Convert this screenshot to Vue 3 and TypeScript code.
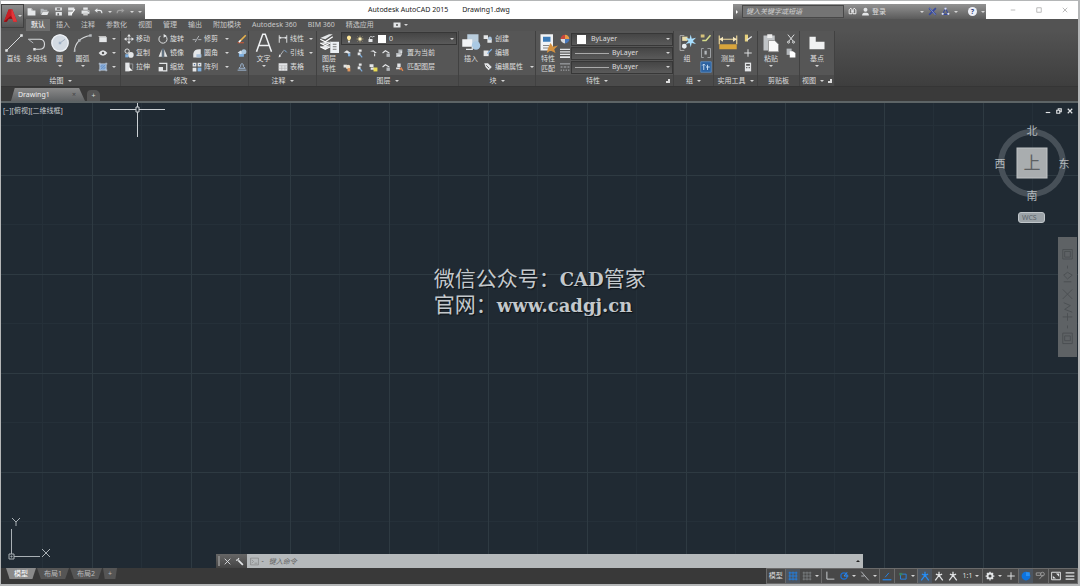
<script setup lang="ts">
import { h, ref, type FunctionalComponent } from 'vue'

type Shape = { d: string; f?: string; s?: string; w?: number }

const L = '#e4e6e8'
const M = '#b4b8bc'
const B = '#7fb0e0'
const stroke = (d: string, s = L, w = 1.5): Shape => ({ d, s, w })
const fill = (d: string, f = L): Shape => ({ d, f })
const circle = (x: number, y: number, r: number) =>
  `M${x - r} ${y}a${r} ${r} 0 1 0 ${2 * r} 0a${r} ${r} 0 1 0 ${-2 * r} 0z`

const glyphs: Record<string, Shape[]> = {
  logo: [fill('M1 14 6 1h4l5 13h-4l-1-3H6l-2 3z', '#b3161b'), fill('M8 1h2l5 13h-4L8 5z', '#e2363a'), fill('M6 1h3v7l-3 3-5 3z', '#c71f25'), fill('M1 14 8 8l2 3H6l-2 3z', '#8d0f14')],
  newdoc: [fill('M1 2h7l3 4h4v9H1z'), fill('M8 2v4h3z', '#999')],
  open: [fill('M1 3h5l1 2h6v2H5l-3 6H1z', M), fill('M5 8h11l-3 6H2z')],
  save: [fill('M2 1h12v5H2zM3 9h11v6H3z'), fill('M5 2h6v3H5zM6 11h3v4H6z', '#666')],
  saveas: [fill('M2 1h11v5H2zM2 8h7v7H2z'), stroke('M7 13 14 4', '#fff', 2)],
  print: [fill('M4 1h8v4H4zM1 6h14v6H1z'), fill('M4 10h8v5H4z', '#ccc'), fill('M12 7h2v1h-2z', '#555')],
  undo: [fill('M1 6 6 2v8z'), stroke('M4 6h6q4 0 4 5', L, 2)],
  redo: [fill('M15 6 10 2v8z', '#a0a0a0'), stroke('M12 6H6q-4 0-4 5', '#a0a0a0', 2)],
  line: [stroke('M2 14 14 2', '#d8dadc', 0.8), fill('M1 13h2v2H1zM13 1h2v2h-2z')],
  polyline: [stroke('M1 5h9q4 0 4 4t-4 4H7', '#d8dadc', 0.9), stroke('M1 5 5 8', M, 0.8), fill('M5 12h2v2H5z')],
  circle: [fill(circle(8, 8, 7), '#d3dae2'), stroke(circle(8, 8, 6.5), '#eef1f5', 0.9), stroke('M8 8 12 5', '#a3b0c0', 0.8), fill('M7 7h2v2H7z', '#9fb0c5')],
  arc: [stroke('M1 15Q2 4 14 2', '#d8dadc', 0.9), fill('M1 13h1v2H1zM4 5h2v2H4zM13 1h2v2h-2z', M)],
  rect: [fill('M2 5h12v8H2z'), stroke('M1 4h12', '#fff', 1)],
  ellipse: [fill('M1 8q7-9 14 0-7 9-14 0z'), fill(circle(8, 8, 2), '#555')],
  hatch: [fill('M3 3h10v10H3z', '#83a8d5'), stroke('M3 1v14M13 1v14M1 3h14M1 13h14', '#c7d6ea', 1.2), stroke('M4 12l8-8M4 8l4-4M8 12l4-4', '#5d86bd', 1)],
  move: [stroke('M8 2v12M2 8h12', L, 1.2), fill('M8 0 11 4H5zM8 16 11 12H5zM0 8l4-3v6zM16 8l-4-3v6z')],
  copy: [stroke(circle(5, 5, 3.5)), fill(circle(11, 11, 4.5)), fill('M2 10h5v5H2z', B)],
  stretch: [fill('M2 1h7v14H2z'), fill('M8 8l6 6H8z', '#fff'), stroke('M9 3h5v9', M, 1)],
  rotate: [stroke('M10 2A6.5 6.5 0 1 1 4 3'), fill('M9 0l5 3-5 3z')],
  mirror: [fill('M6 2v12H1zM10 2v12h5z'), stroke('M8 1v14', B, 1)],
  scale: [stroke('M2 2h12v12H8', L, 2), fill('M1 8h7v7H1z')],
  trim: [stroke('M1 9h5M10 9h5', M), stroke('M5 13 11 3', M)],
  fillet: [fill('M2 15V9Q3 2 12 2h2v13z'), fill('M7 10h8v5H7z', '#a9bfd7')],
  array: [fill('M1 1h6v6H1zM9 1h6v6H9zM1 9h6v6H1z'), fill('M9 9h6v6H9z', B), fill('M3 3h2v2H3zM11 3h2v2h-2z', '#5678a4')],
  erase: [stroke('M5 11 14 2', '#e9b34e', 2.5), stroke('M1 14h10', '#e35b32', 1.5), stroke('M3 13l3-3', '#fff', 2.5)],
  explode: [fill('M3 8h8v6H3z', B), fill('M1 7l5-3 5 3-5 3z', '#d7e4ef'), fill(circle(11, 6, 4), '#a9c5dc')],
  offset: [stroke('M1 13h14M3 10l3-3V4q2-3 4 0v3l3 3z', '#a4bfdd')],
  letter: [stroke('M2 15 7 1h2l5 14M4 10h8', '#eef0f2', 1.2)],
  dim: [stroke('M2 2v12M14 2v12M2 6h12'), fill('M2 6l3-2v4zM14 6l-3-2v4z')],
  leader: [stroke('M2 14 9 4', M), fill('M1 15l1-5 3 3z'), stroke('M10 3l4 4', B)],
  table: [fill('M1 2h14v12H1z'), stroke('M1 6h14M1 10h14M6 6v8M11 6v8', '#aaa', 0.9)],
  layers: [fill('M1 4l7-3h3L5 5zM1 8l5-1h4L5 9zM1 11l5-1h3l-4 3z'), stroke('M1 5l4 2 6-4M1 8l4 2 4-2M1 11l4 2 4-2', '#fff', 1), fill('M9 7h7v9H9z', '#edf1f5'), stroke('M11 9h3M11 11h3M11 13h3', '#777', 0.8)],
  bulb: [fill('M8 1a4.500 4.500 0 0 1 2.500 8l-.5 2H6l-.5-2A4.500 4.500 0 0 1 8 1z', '#ffe89a'), fill('M6 12h4v3H6z', '#c9ccd0')],
  sun: [fill(circle(8, 8, 3.5), '#fff2b8'), stroke('M8 1v3M8 12v3M1 8h3M12 8h3M3 3l2 2M11 11l2 2M3 13l2-2M11 5l2-2', '#e6cf8a', 1)],
  unlock: [stroke('M5 8V5q3-5 6 0', L), fill('M3 8h8v6H3z'), stroke('M11 3h4', L)],
  layA: [fill('M1 6l6-4 7 5-4 2-3-2z'), fill('M9 8h4v5H9z', B)],
  layB: [fill('M5 1h5v4H5zM3 6h5v5H3z'), stroke('M7 10l4 5', B, 2)],
  layC: [fill('M2 4l6-2 6 5h-4L8 5z'), stroke('M10 8v5', L, 2)],
  layD: [stroke('M1 7l5-4 7 4', L, 2), fill('M8 8h6v6H8z', M)],
  layE: [fill('M6 1h7v6H6zM2 7h8v7H2z', M), stroke('M4 11h7V4', '#fff')],
  layF: [fill('M1 3h6v5H1z'), fill(circle(9, 7, 4), '#e9dfcc'), fill('M8 9h5v6H8z', '#df965d')],
  layG: [fill('M1 2h7v5H1zM3 8h6v4H3z'), fill('M8 8h7v7H8z', '#eadc54')],
  layH: [fill('M4 1h6v6H4zM2 8h7v3H2z'), stroke('M8 12l3-3 3 5', '#e2874e', 2.5)],
  insert: [fill('M5 1h9v8H5z', '#b9cddd'), fill('M1 5h8v6H1z', '#f1f3f5'), fill(circle(12, 10, 3.4), '#aac9e3'), stroke('M4 13h5v-2', L, 1)],
  create: [fill('M1 2h7v6H1zM7 8h7v6H7z'), fill(circle(11, 7, 3), '#a8c4dd')],
  edit: [fill('M1 4h8v9H1z'), stroke('M7 9 14 2', B, 2)],
  attr: [fill('M2 2h6l6 6-5 5-5-5z'), stroke('M5 5l5 5', '#666')],
  match: [fill('M2 1h10v13H2z', '#f1f3f5'), fill('M4 3h6v4H4z', '#3c7cb9'), stroke('M4 10h5M4 12h4', '#888', 0.8), fill('M10 8l2 3 4-1-3 3 1 3-4-2-3 2 1-4z', '#d4913f')],
  wheel: [fill('M8 8V1a7 7 0 0 1 7 7z', '#e99a45'), fill('M8 8H1a7 7 0 0 1 7-7z', '#c8473d'), fill('M8 8h7a7 7 0 0 1-7 7z', '#4777bb'), fill('M8 8v7a7 7 0 0 1-7-7z', '#d6d9dc')],
  weights: [fill('M0 1h16v2H0zM0 5h16v2H0zM0 9h16v2H0zM0 13h16v3H0z')],
  types: [stroke('M0 3h16M1 8h3M6 8h4M12 8h3M1 13h2M5 13h2M9 13h2M13 13h2', M)],
  group: [stroke('M5 1H1v14h4', '#aaa', 0.9), fill('M3 2h5v4H3z', '#e9dca9'), fill(circle(5, 11, 2.3), '#e8edf1'), fill('M11 0l1 4 4-1-3 3 3 3-4-1-1 4-1-4-4 1 3-3-3-3 4 1z', '#a8dfff')],
  ungroup: [fill('M1 2h5v4H1z', '#d4c07a'), stroke('M3 10h5l6-7', '#d7dd8a', 2)],
  gedit: [stroke('M5 2H2v12h3M10 2h4v12h-4', M, 1), fill('M6 5h3v5H6z', M)],
  gsel: [fill('M1 1h14v14H1z', '#2d62a0'), stroke('M1 1h14v14H1z', '#5d93cb', 1), stroke('M5 4v8M3 6l2-2 2 2M10 5v7M8 8h5', '#cfe2f5', 1.2)],
  measure: [stroke('M1 2v7M15 2v7M1 5h14', '#f0d99b', 0.9), fill('M1 9h14v4H1z', '#d9a53c'), fill('M1 5l3-2v4zM15 5l-3-2v4z', '#f6e7bc')],
  quick: [fill('M3 1h5v11H3z', '#e8d27e'), stroke('M6 10 14 4', L, 2)],
  plus: [stroke('M8 2v12M2 8h12')],
  calc: [fill('M3 1h10v14H3z'), fill('M5 3h6v3H5zM5 8h2v2H5zM9 8h2v2H9z', '#555')],
  paste: [fill('M2 2h9v12H2z', '#c0c3c6'), fill('M5 1h4v3H5z', '#eee'), fill('M6 6h5l3 3v6H6z', '#fafafa'), stroke('M6 6h5l3 3v6H6z', '#888', 0.6)],
  cut: [stroke('M3 1l8 10M13 1 5 11'), stroke(circle(4, 13, 1.6)), stroke(circle(12, 13, 1.6))],
  copydoc: [fill('M1 1h8v10H1z', M), fill('M6 5h5l4 3v7H6z', '#fff')],
  base: [fill('M2 3h5v4h7v6H2z', '#f0f1f2')],
  binoc: [stroke('M2 12V5l3-3 2 3v7zM9 12V5l2-3 3 3v7z', '#fff', 1.5), fill('M6 6h4v3H6z')],
  person: [fill(circle(8, 5, 3.5)), fill('M2 15q0-5 4-5h4q4 0 4 5z')],
  exchange: [stroke('M2 2l12 12M14 2 2 14', '#35489f', 3), stroke('M3 2l10 12', '#bbc4e2', 1)],
  cloud: [stroke('M8 2 3 13h10z', '#35489f', 2), fill(circle(8, 3, 2), '#dce0ee'), fill(circle(3, 12, 2), '#dce0ee'), fill(circle(13, 12, 2), '#dce0ee')],
  close: [stroke('M3 3l10 10M13 3 3 13')],
  wrench: [stroke('M6 6l8 8', L, 3), stroke('M7 2 5 5 2 6', L, 2)],
  prompt: [stroke('M1 2h14v12H1zM3 5l3 3-3 3M8 11h5', '#777', 1)],
  grid: [stroke('M3 1v14M8 1v14M13 1v14M1 3h14M1 8h14M1 13h14', '#227fe0')],
  snap: [stroke('M3 1v14M8 1v14M13 1v14M1 3h14M1 8h14M1 13h14', '#8b9094', 1)],
  ortho: [stroke('M3 1v12h12', '#d0d3d5')],
  polar: [stroke(circle(8, 8, 5), '#1e6fd0', 2), stroke('M8 8h7M8 8l5-6', '#2f93ff')],
  iso: [stroke('M2 1 14 15M2 8h5', '#b9bcc0')],
  track: [stroke('M1 14h14', '#2584e8', 2), stroke('M5 10 11 3', '#2584e8')],
  osnap: [stroke('M4 5h9v8H4z', '#2584e8'), fill('M2 3h5v4H2z', '#3d815c')],
  walker: [stroke('M8 1v6L2 15M8 7l6 8M3 5l5 2 5-2', '#e0e2e4', 2)],
  walkerB: [stroke('M8 1v6L2 15M8 7l6 8M3 5l5 2 5-2', '#258df5', 2)],
  gear: [stroke(circle(8, 8, 4), L, 3), stroke('M8 1v2M8 13v2M1 8h2M13 8h2M3 3l2 2M11 11l2 2M3 13l2-2M11 5l2-2', L, 2)],
  perf: [fill(circle(8, 8, 7), '#0d73df'), fill('M8 2h6v6H8z', '#278ff3')],
  isolate: [stroke('M2 3h7v4H2zM7 13l6-7', '#999'), stroke(circle(12, 5, 3), '#999')],
  full: [stroke('M1 2h14v12H1z'), fill('M8 4h5v5zM3 8v4h5z')],
  menu: [stroke('M1 3h14M1 8h14M1 13h14', L, 2)],
  video: [fill('M1 3h14v10H1z'), fill(circle(8, 8, 2), '#555')],
}

const Ico: FunctionalComponent<{ name: string }> = (props) =>
  h('svg', { viewBox: '0 0 16 16', 'aria-hidden': 'true', class: 'ico' },
    (glyphs[props.name] ?? []).map((g) =>
      h('path', { d: g.d, fill: g.f ?? 'none', stroke: g.s ?? 'none', 'stroke-width': g.w ?? 0 })))
Ico.props = ['name']

const quick = ['newdoc', 'open', 'save', 'saveas', 'print', 'undo', '', 'redo', '', '']
const tabs = ['默认', '插入', '注释', '参数化', '视图', '管理', '输出', '附加模块', 'Autodesk 360', 'BIM 360', '精选应用']
const activeTab = ref('默认')

interface Tool { icon: string; label: string; arrow?: boolean }
const t = (icon: string, label: string, arrow = false): Tool => ({ icon, label, arrow })

const drawTools = [t('line', '直线'), t('polyline', '多段线'), t('circle', '圆', true), t('arc', '圆弧', true)]
const drawMore = ['rect', 'ellipse', 'hatch']
const modifyTools = [
  [t('move', '移动'), t('copy', '复制'), t('stretch', '拉伸')],
  [t('rotate', '旋转'), t('mirror', '镜像'), t('scale', '缩放')],
  [t('trim', '修剪', true), t('fillet', '圆角', true), t('array', '阵列', true)],
]
const noteTools = [t('dim', '线性', true), t('leader', '引线', true), t('table', '表格')]
const layerRows = [
  { icons: ['layA', 'layB', 'layC', 'layD', 'layE'], label: '置为当前' },
  { icons: ['layF', 'layB', 'layG', 'layD', 'layH'], label: '匹配图层' },
]
const blockTools = [t('create', '创建'), t('edit', '编辑'), t('attr', '编辑属性', true)]
const props3 = [
  { icon: 'wheel', label: '颜色', kind: 'swatch' },
  { icon: 'weights', label: '线宽', kind: 'rule' },
  { icon: 'types', label: '线型', kind: 'rule' },
]
const layouts = ['模型', '布局1', '布局2']
const command = ref('')
const search = ref('')
const status: { icon?: string; text?: string; arrow?: boolean; on?: boolean; edge?: boolean }[] = [
  { text: '模型', edge: true },
  { icon: 'grid', on: true },
  { icon: 'snap', arrow: true, edge: true },
  { icon: 'ortho' },
  { icon: 'polar', arrow: true },
  { icon: 'iso', arrow: true, edge: true },
  { icon: 'track', edge: true },
  { icon: 'osnap', arrow: true, edge: true },
  { icon: 'walkerB', on: true },
  { icon: 'walker' },
  { icon: 'walker' },
  { text: '1:1', arrow: true, edge: true },
  { icon: 'gear', arrow: true },
  { icon: 'plus', edge: true },
  { icon: 'perf', on: true },
  { icon: 'isolate', edge: true },
  { icon: 'full' },
  { icon: 'menu' },
]
</script>

<template>
  <div class="app">
    <header class="top">
      <button class="logo" aria-label="应用程序菜单"><Ico name="logo" /><i class="arr"></i></button>
      <div class="titlebar">
        <div class="quick">
          <button v-for="(q, i) in quick" :key="i" aria-label="快速访问">
            <Ico v-if="q" :name="q" /><i v-else class="arr"></i>
          </button>
        </div>
        <h1 class="title"><span>Autodesk AutoCAD 2015</span><span>Drawing1.dwg</span></h1>
        <div class="info">
          <i class="arr side"></i>
          <input v-model="search" class="search" aria-label="搜索" placeholder="键入关键字或短语" />
          <button aria-label="查找"><Ico name="binoc" /></button>
          <button class="login"><Ico name="person" />登录</button>
          <i class="arr"></i>
          <button aria-label="Exchange"><Ico name="exchange" /></button>
          <button aria-label="连接"><Ico name="cloud" /></button>
          <i class="arr"></i>
          <span class="sep"></span>
          <button class="help" aria-label="帮助"><b>?</b></button>
          <i class="arr"></i>
        </div>
        <div class="win">
          <button aria-label="最小化"><svg viewBox="0 0 8 8"><path d="M1 4h6" /></svg></button>
          <button aria-label="最大化"><svg viewBox="0 0 8 8"><path d="M1 1h6v6H1z" /></svg></button>
          <button aria-label="关闭"><svg viewBox="0 0 8 8"><path d="M1 1l6 6M7 1 1 7" /></svg></button>
        </div>
      </div>
      <nav class="tabs">
        <button v-for="name in tabs" :key="name" :class="{ active: name === activeTab }" @click="activeTab = name">{{ name }}</button>
        <button class="play" aria-label="显示"><Ico name="video" /><i class="arr"></i></button>
      </nav>
    </header>

    <section class="ribbon">
      <div class="panel draw">
        <div class="body">
          <button v-for="b in drawTools" :key="b.label" class="big"><Ico :name="b.icon" /><span>{{ b.label }}</span><i v-if="b.arrow" class="arr"></i></button>
          <div class="col">
            <button v-for="d in drawMore" :key="d" class="small" :aria-label="d"><Ico :name="d" /><i class="arr"></i></button>
          </div>
        </div>
        <h2>绘图<i class="arr"></i></h2>
      </div>

      <div class="panel modify">
        <div class="body">
          <div v-for="(c, i) in modifyTools" :key="i" class="col">
            <button v-for="b in c" :key="b.label" class="small"><Ico :name="b.icon" />{{ b.label }}<i v-if="b.arrow" class="arr"></i></button>
          </div>
          <div class="col">
            <button class="small" aria-label="删除"><Ico name="erase" /></button>
            <button class="small" aria-label="分解"><Ico name="explode" /></button>
            <button class="small" aria-label="偏移"><Ico name="offset" /></button>
          </div>
        </div>
        <h2>修改<i class="arr"></i></h2>
      </div>

      <div class="panel note">
        <div class="body">
          <button class="big"><Ico name="letter" /><span>文字</span><i class="arr"></i></button>
          <div class="col">
            <button v-for="b in noteTools" :key="b.label" class="small"><Ico :name="b.icon" />{{ b.label }}<i v-if="b.arrow" class="arr"></i></button>
          </div>
        </div>
        <h2>注释<i class="arr"></i></h2>
      </div>

      <div class="panel layer">
        <div class="body">
          <button class="big"><Ico name="layers" /><span>图层<br />特性</span></button>
          <div class="col grow">
            <button class="combo" aria-label="图层"><Ico name="bulb" /><Ico name="sun" /><Ico name="unlock" /><em></em><span>0</span><i class="arr"></i></button>
            <div v-for="r in layerRows" :key="r.label" class="iconrow">
              <button v-for="(n, i) in r.icons.slice(0, 4)" :key="i" aria-label="图层工具"><Ico :name="n" /></button>
              <button><Ico :name="r.icons[4]" />{{ r.label }}</button>
            </div>
          </div>
        </div>
        <h2>图层<i class="arr"></i></h2>
      </div>

      <div class="panel block">
        <div class="body">
          <button class="big"><Ico name="insert" /><span>插入</span></button>
          <div class="col">
            <button v-for="b in blockTools" :key="b.label" class="small"><Ico :name="b.icon" />{{ b.label }}<i v-if="b.arrow" class="arr"></i></button>
          </div>
        </div>
        <h2>块<i class="arr"></i></h2>
      </div>

      <div class="panel props">
        <div class="body">
          <button class="big"><Ico name="match" /><span>特性<br />匹配</span></button>
          <div class="col grow">
            <div v-for="p in props3" :key="p.label" class="proprow">
              <Ico :name="p.icon" />
              <button class="combo" :aria-label="p.label"><em v-if="p.kind === 'swatch'"></em><s v-else></s><span>ByLayer</span><i class="arr"></i></button>
            </div>
          </div>
        </div>
        <h2>特性<i class="arr"></i><i class="launch"></i></h2>
      </div>

      <div class="panel grp">
        <div class="body">
          <button class="big"><Ico name="group" /><span>组</span></button>
          <div class="col">
            <button class="small" aria-label="解除编组"><Ico name="ungroup" /></button>
            <button class="small" aria-label="组编辑"><Ico name="gedit" /></button>
            <button class="small" aria-label="组选择"><Ico name="gsel" /></button>
          </div>
        </div>
        <h2>组<i class="arr"></i></h2>
      </div>

      <div class="panel util">
        <div class="body">
          <button class="big"><Ico name="measure" /><span>测量</span><i class="arr"></i></button>
          <div class="col">
            <button class="small" aria-label="快速选择"><Ico name="quick" /></button>
            <button class="small" aria-label="点坐标"><Ico name="plus" /></button>
            <button class="small" aria-label="计算器"><Ico name="calc" /></button>
          </div>
        </div>
        <h2>实用工具<i class="arr"></i></h2>
      </div>

      <div class="panel clip">
        <div class="body">
          <button class="big"><Ico name="paste" /><span>粘贴</span><i class="arr"></i></button>
          <div class="col">
            <button class="small" aria-label="剪切"><Ico name="cut" /></button>
            <button class="small" aria-label="复制"><Ico name="copydoc" /></button>
          </div>
        </div>
        <h2>剪贴板</h2>
      </div>

      <div class="panel view">
        <div class="body">
          <button class="big"><Ico name="base" /><span>基点</span><i class="arr"></i></button>
        </div>
        <h2>视图<i class="arr"></i><i class="launch"></i></h2>
      </div>
    </section>

    <div class="files">
      <button class="file"><span>Drawing1</span><span class="x">×</span></button>
      <button class="add" aria-label="新图形">+</button>
    </div>

    <main class="canvas">
      <p class="viewlabel">[−][俯视][二维线框]</p>
      <svg class="cross" viewBox="0 0 56 34" aria-hidden="true">
        <path d="M0 6.500H55M27.500 0V34" /><path class="pick" d="M26 4h3v5h-3z" />
      </svg>

      <div class="mark">
        <p>微信公众号：<b>CAD</b>管家</p>
        <p>官网：<b>www.cadgj.cn</b></p>
      </div>

      <div class="docwin">
        <button aria-label="最小化"><svg viewBox="0 0 8 8"><path d="M1 6h6" /></svg></button>
        <button aria-label="还原"><svg viewBox="0 0 8 8"><path d="M3 3V1h4v4H5M1 3h4v4H1z" /></svg></button>
        <button aria-label="关闭"><svg viewBox="0 0 8 8"><path d="M1 1l6 6M7 1 1 7" /></svg></button>
      </div>

      <svg class="cube" viewBox="0 0 78 88" role="img" aria-label="视图方位">
        <circle cx="39" cy="43" r="31" />
        <rect x="24" y="28" width="30" height="30" />
        <text x="39" y="49" class="face">上</text>
        <text x="39" y="15">北</text><text x="39" y="80">南</text>
        <text x="7" y="48">西</text><text x="71" y="48">东</text>
      </svg>
      <button class="wcs">WCS</button>

      <div class="navbar" aria-hidden="true">
        <svg viewBox="0 0 20 120">
          <path d="M5 10h10v10H5zM7 12h6v6H7zM10 27v3M6 37l4-3 5 3-5 4zM6 44h8M5 52l10 10M15 52 5 62M6 66l7 3-6 4 8 3M5 81h10M10 77v8M10 90v3M5 98h10v11H5zM7 101h6v5H7z" />
        </svg>
      </div>

      <svg class="ucs" viewBox="0 0 46 46" aria-hidden="true">
        <path d="M6.500 38V13M9 40.500H35M4 38h5v5H4zM6 40h1v1H6z" />
        <path d="M7 2l4 4 4-4M11 6v4M37 33l8 8M45 33l-8 8" />
      </svg>

      <div class="cmd">
        <span class="grip"></span>
        <button aria-label="关闭"><Ico name="close" /></button>
        <button aria-label="自定义"><Ico name="wrench" /></button>
        <label class="field"><Ico name="prompt" /><span>-</span><input v-model="command" aria-label="命令" placeholder="键入命令" /><i class="arr up"></i></label>
      </div>
    </main>

    <footer class="bottom">
      <div class="layouts">
        <button v-for="(l, i) in layouts" :key="l" :class="{ active: i === 0 }">{{ l }}</button>
        <button class="plus">+</button>
      </div>
      <div class="status">
        <button v-for="(s, i) in status" :key="i" :class="{ on: s.on, edge: s.edge }" :aria-label="s.text ?? s.icon">
          <Ico v-if="s.icon" :name="s.icon" /><span v-else>{{ s.text }}</span><i v-if="s.arrow" class="arr"></i>
        </button>
      </div>
    </footer>
  </div>
</template>

<style>
html, body { background: #b9bbbc; }
</style>

<style scoped>
.app {
  box-sizing: border-box;
  min-height: 100vh;
  display: flex;
  flex-direction: column;
  border: 1px solid #b4b6b7;
  border-right-width: 2px;
  border-bottom-width: 2px;
  background: #3b3b3b;
  color: #dcdcdc;
  font: 7px/10px "Noto Sans", "Noto Sans CJK SC", sans-serif;
}
.app * { box-sizing: border-box; }
button {
  display: flex;
  align-items: center;
  padding: 0;
  border: 0;
  background: none;
  color: inherit;
  font: inherit;
  white-space: nowrap;
}
h1, h2, p { margin: 0; font: inherit; }
.ico { width: 10px; height: 10px; flex: none; }
.arr {
  flex: none;
  border: 2px solid transparent;
  border-top-color: #d5d5d5;
  border-bottom-width: 0;
}
.arr.side { border: 2px solid transparent; border-left-color: #fff; border-right-width: 0; }
.arr.up { border: 2px solid transparent; border-bottom-color: #222; border-top-width: 0; }

.top {
  display: grid;
  grid-template: 18px 12px / 23px 1fr;
  background: linear-gradient(#fff 18px, #535353 18px);
}
.logo {
  grid-row: 1 / 3;
  margin: 3px 0;
  justify-content: center;
  border: 1px solid #404040;
  background: linear-gradient(#8b8b8b, #555);
}
.logo .ico { width: 15px; height: 18px; }
.titlebar { display: flex; align-items: stretch; }
.quick {
  display: flex;
  width: 121px;
  margin-top: 3px;
  padding: 0 3px;
  align-items: center;
  justify-content: space-between;
  background: linear-gradient(#919191, #595959);
}
.quick .ico { width: 9px; height: 9px; }
.title { flex: 1; display: flex; align-items: center; justify-content: center; gap: 14px; color: #222; }
.info {
  display: flex;
  align-items: center;
  width: 253px;
  margin-top: 3px;
  padding: 0 3px;
  gap: 4px;
  background: linear-gradient(#929292, #5b5b5b);
}
.info .ico { width: 9px; height: 9px; }
.search {
  width: 102px;
  height: 13px;
  padding: 0 3px;
  border: 1px solid #484848;
  background: #747474;
  color: #ddd;
  font: italic 7px/10px "Noto Sans", "Noto Sans CJK SC", sans-serif;
}
.search::placeholder { color: #d0d0d0; }
.login { gap: 2px; margin-right: 30px; }
.sep { width: 1px; height: 10px; margin: 0 1px; background: #555; }
.help { flex: none; width: 9px; height: 9px; justify-content: center; border-radius: 50%; background: #eef0f7; color: #2f437f; }
.win { display: flex; width: 92px; justify-content: space-around; padding-left: 14px; }
.win svg { width: 6px; height: 6px; }
.win path { fill: none; stroke: #a5a5a5; }
.tabs { display: flex; gap: 1px; padding-left: 2px; color: #c8c8c8; }
.tabs button { padding: 0 5px; }
.tabs .active { background: #6d6d6d; color: #fff; }
.tabs .play { margin-left: 8px; gap: 3px; }
.tabs .ico { width: 8px; height: 8px; }

.ribbon { display: flex; background: linear-gradient(#535353, #3e3e3e); color: #dedede; }
.panel {
  display: flex;
  flex-direction: column;
  flex: none;
  border-right: 1px solid #414141;
  background: #565656;
}
.body { display: flex; height: 44px; padding-top: 1px; }
.panel h2 {
  display: flex;
  align-items: center;
  justify-content: center;
  gap: 4px;
  height: 11px;
  background: #4b4b4b;
}
.big { flex-direction: column; width: 24px; height: 42px; line-height: 10px; }
.big .ico { width: 20px; height: 20px; margin: 1px 0; }
.big .arr { margin-top: 1px; }
.col { display: flex; flex-direction: column; }
.grow { flex: 1; }
.small { height: 14px; gap: 2px; }
.small .arr { margin-left: 5px; }
.draw { width: 120px; }
.draw .body { padding-left: 1px; }
.draw .big { width: 23px; }
.draw .col { padding-left: 4px; }
.draw .small .arr { margin-left: 2px; }
.modify { width: 128px; }
.modify .body { padding-left: 3px; gap: 8px; }
.note { width: 68px; }
.note .big { width: 29px; }
.note .small .arr { margin-left: 3px; }
.layer { width: 142px; }
.combo {
  height: 13px;
  gap: 3px;
  padding: 0 2px 0 3px;
  border: 1px solid #373737;
  background: linear-gradient(#454545, #5a5a5a);
}
.combo .arr { margin-left: auto; }
.combo em { width: 8px; height: 8px; background: #fff; }
.combo .ico { width: 8px; height: 8px; }
.combo s { width: 34px; height: 1px; background: #aaa; }
.layer .combo { margin: 0 1px 1px 0; }
.iconrow { display: flex; height: 14px; padding-left: 2px; gap: 4px; }
.iconrow button { gap: 3px; }
.iconrow .ico { width: 9px; height: 9px; }
.block { width: 77px; }
.props { width: 138px; }
.proprow { display: flex; align-items: center; height: 14px; gap: 1px; }
.proprow .combo { flex: 1; }
.proprow em { margin: 0 2px; width: 9px; height: 9px; }
.props h2 .launch { margin-left: 54px; }
.props h2 { justify-content: flex-end; padding-right: 3px; }
.launch { width: 4px; height: 4px; border-right: 2px solid #ddd; border-bottom: 2px solid #ddd; }
.grp { width: 40px; }
.grp .body { padding-left: 1px; gap: 1px; }
.grp .ico { width: 17px; }
.grp .small .ico { width: 12px; height: 12px; }
.util { width: 44px; }
.util .body { padding-left: 2px; gap: 3px; }
.clip { width: 42px; }
.clip .body { padding-left: 1px; gap: 3px; }
.view { width: 35px; }
.view .big { margin: 0 auto; }

.files {
  display: flex;
  align-items: flex-end;
  gap: 2px;
  height: 17px;
  padding-left: 10px;
  border-top: 1px solid #353535;
  border-bottom: 2px solid #5d6466;
  background: #3a3a3a;
}
.file {
  justify-content: space-between;
  width: 74px;
  height: 13px;
  padding: 0 9px 0 7px;
  clip-path: polygon(0 100%, 5% 0, 92% 0, 100% 100%);
  background: linear-gradient(#898989, #5f6264);
  color: #f0f0f0;
}
.file .x { color: #444; }
.add { width: 13px; height: 11px; justify-content: center; border-radius: 4px 5px 0 0; background: #555; }

.canvas {
  position: relative;
  flex: 1;
  display: flex;
  align-items: flex-end;
  overflow: hidden;
  background-color: #202a33;
  background-image:
    linear-gradient(90deg, #2e3a42 1px, transparent 1px),
    linear-gradient(#2e3a42 1px, transparent 1px),
    linear-gradient(90deg, #253039 1px, transparent 1px),
    linear-gradient(#253039 1px, transparent 1px);
  background-size: 99px 99px;
  background-position: 91px 0, 0 72px, 41px 0, 0 22px;
}
.viewlabel { position: absolute; left: 2px; top: 3px; color: #c9cdd0; }
.cross { position: absolute; left: 109px; top: 0; width: 56px; height: 34px; fill: none; stroke: #cbd0d4; }
.cross .pick { fill: #202a33; }
.mark {
  position: absolute;
  left: 40%;
  top: 161px;
  padding-left: 2px;
  color: #c3c8cc;
  font: 21px/26px "Noto Sans CJK SC", sans-serif;
  text-shadow: 1px 1px 1px #0c1115;
  white-space: nowrap;
}
.mark p { height: 26px; }
.mark b { font: bold 18px/18px "DejaVu Serif", serif; }
.docwin { position: absolute; right: 5px; top: 5px; display: flex; gap: 5px; }
.docwin svg { width: 6px; height: 6px; display: block; }
.docwin path { fill: none; stroke: #e2e5e7; stroke-width: 1.5; }
.cube { position: absolute; right: 7px; top: 17px; width: 78px; height: 88px; }
.cube circle { fill: none; stroke: #475058; stroke-width: 6; }
.cube rect { fill: #a9adaf; stroke: #c0c3c5; }
.cube text { fill: #b2b8bc; font: 11px "Noto Sans CJK SC", sans-serif; text-anchor: middle; }
.cube .face { fill: #5c6063; font-size: 17px; }
.wcs {
  position: absolute;
  right: 33px;
  top: 109px;
  width: 27px;
  height: 11px;
  padding-left: 3px;
  border: 1px solid #c0c6ca;
  border-radius: 3px;
  background: #9ca3a8;
  color: #5d656b;
}
.navbar { position: absolute; right: 1px; top: 134px; width: 19px; height: 120px; background: #5e6265; }
.navbar svg { display: block; width: 19px; height: 120px; fill: none; stroke: #4b4f52; }
.ucs { position: absolute; left: 4px; bottom: 6px; width: 46px; height: 46px; fill: none; stroke: #a9b0b5; }
.cmd {
  display: flex;
  width: 60%;
  height: 14px;
  margin-left: 20%;
  align-items: center;
  gap: 3px;
  background: linear-gradient(#666, #444);
}
.cmd .ico { width: 9px; height: 9px; }
.grip { width: 2px; height: 10px; margin-left: 2px; background: #858585; }
.field { display: flex; flex: 1; height: 14px; align-items: center; gap: 2px; padding: 0 3px; background: #b5b9bb; color: #555; }
.field input { flex: 1; min-width: 0; height: 12px; padding: 0 3px; border: 0; background: none; font: italic 7px/10px "Noto Sans", "Noto Sans CJK SC", sans-serif; }
.field input::placeholder { color: #666; }

.bottom { display: flex; justify-content: space-between; height: 16px; background: #393939; }
.layouts { display: flex; gap: 1px; padding-left: 5px; }
.layouts button {
  height: 11px;
  padding: 1px 7px 0;
  clip-path: polygon(0 0, 100% 0, 88% 100%, 12% 100%);
  background: #555;
  color: #bbb;
}
.layouts .active { padding: 1px 8px 0; background: #8a8a8a; color: #fff; }
.layouts .plus { padding: 0 5px; }
.status { display: flex; flex: 0 0 29%; border: 1px solid #6a6a6a; background: #484848; }
.status button { flex: 1 0 auto; justify-content: center; gap: 3px; padding: 0 1px; }
.status .edge { border-right: 1px solid #6a6a6a; }
.status .on { background: #4c5560; }
</style>
